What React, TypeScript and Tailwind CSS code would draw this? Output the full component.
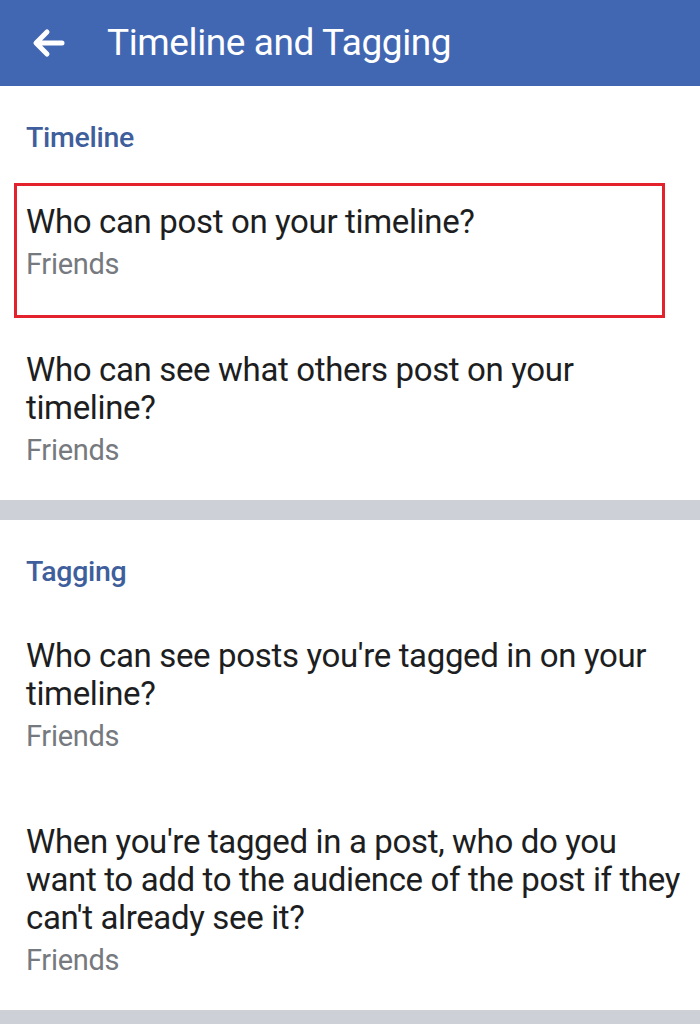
import React from "react";

type Item = { lines: string[]; value: string; highlight?: boolean };

const sections: { title: string; items: Item[] }[] = [
  {
    title: "Timeline",
    items: [
      { lines: ["Who can post on your timeline?"], value: "Friends", highlight: true },
      { lines: ["Who can see what others post on your", "timeline?"], value: "Friends" },
    ],
  },
  {
    title: "Tagging",
    items: [
      { lines: ["Who can see posts you're tagged in on your", "timeline?"], value: "Friends" },
      {
        lines: [
          "When you're tagged in a post, who do you",
          "want to add to the audience of the post if they",
          "can't already see it?",
        ],
        value: "Friends",
      },
    ],
  },
];

function BackArrow() {
  return (
    <svg width="34" height="30" viewBox="0 0 34 30" fill="none">
      <path
        d="M30 15H5M15 4L4 15l11 11"
        stroke="white"
        strokeWidth="5"
        strokeLinecap="round"
        strokeLinejoin="round"
      />
    </svg>
  );
}

function SettingRow({ item }: { item: Item }) {
  return (
    <div className="relative pt-[33px] pb-[35px] last:pb-[31px] px-[26px]">
      {item.highlight && (
        <div className="absolute top-[13px] bottom-0 left-[14px] right-[35px] border-[3px] border-[#e3222d]" />
      )}
      <div className="text-[33px] leading-[38px] text-[#1d1e21] tracking-[-0.35px]">
        {item.lines.map((l) => (
          <div key={l} className="whitespace-nowrap">{l}</div>
        ))}
      </div>
      <div className="mt-[4px] text-[29px] leading-[38px] text-[#76797e] tracking-[-0.3px]">
        {item.value}
      </div>
    </div>
  );
}

export default function App() {
  return (
    <div className="w-[700px] h-[1024px] overflow-hidden bg-white font-['Roboto',sans-serif]">
      <header className="h-[86px] bg-[#4267b2] flex items-center pl-[32px]">
        <BackArrow />
        <h1 className="ml-[41px] text-white text-[37px] tracking-[-0.4px] font-normal">
          Timeline and Tagging
        </h1>
      </header>
      {sections.map((s, i) => (
        <div key={s.title}>
          {i > 0 && <div className="h-[20px] bg-[#cdd0d6]" />}
          <div className="h-[84px] flex items-end pb-[14px] px-[26px]">
            <h2 className="text-[28.5px] leading-[36px] font-medium text-[#3f5e9c] tracking-[-0.3px]">
              {s.title}
            </h2>
          </div>
          {s.items.map((it, j) => (
            <SettingRow key={j} item={it} />
          ))}
        </div>
      ))}
      <div className="h-[20px] bg-[#cdd0d6]" />
    </div>
  );
}
